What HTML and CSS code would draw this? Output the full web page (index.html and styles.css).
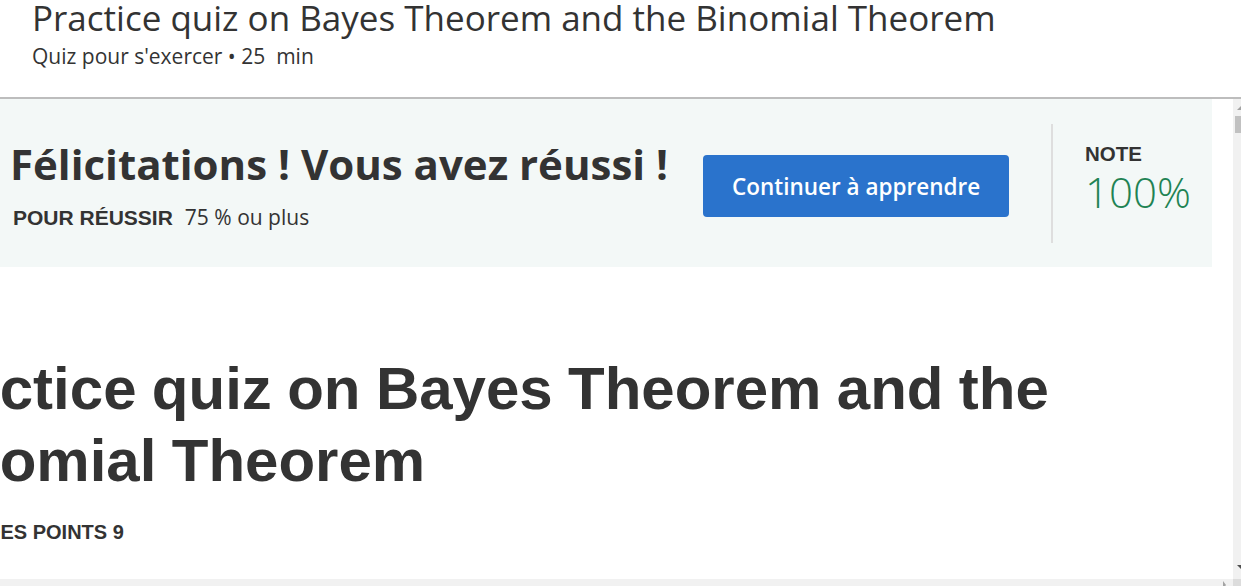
FILE: index.html
```html
<!DOCTYPE html>
<html lang="fr">
<head>
<meta charset="utf-8">
<title>Practice quiz on Bayes Theorem and the Binomial Theorem</title>
<link rel="stylesheet" href="styles.css">
</head>
<body>
<header class="top">
  <h1 class="top-title">Practice quiz on Bayes Theorem and the Binomial Theorem</h1>
  <div class="top-sub">Quiz pour s'exercer • 25&nbsp; min</div>
</header>
<div class="frame">
  <div class="frame-row">
    <main class="viewport">
      <section class="banner">
        <div class="result">
          <h2 class="congrats">Félicitations ! Vous avez réussi !</h2>
          <div class="pass"><span class="pass-label">POUR RÉUSSIR</span><span class="pass-value">75 % ou plus</span></div>
        </div>
        <button class="continue" type="button">Continuer à apprendre</button>
        <div class="divider"></div>
        <div class="grade">
          <div class="grade-label">NOTE</div>
          <div class="grade-value">100%</div>
        </div>
      </section>
      <section class="quiz">
        <h2 class="quiz-title">Practice quiz on Bayes Theorem and the Binomial Theorem</h2>
        <div class="points">TOTAL DES POINTS 9</div>
      </section>
    </main>
    <div class="vscroll">
      <span class="arrow-up"></span>
      <span class="vthumb"></span>
      <span class="arrow-down"></span>
    </div>
  </div>
  <div class="hscroll">
    <div class="htrack"><span class="arrow-right"></span></div>
    <div class="corner"></div>
  </div>
</div>
</body>
</html>
```
FILE: styles.css
```css
html, body {
  margin: 0;
  padding: 0;
  background: #ffffff;
  overflow: hidden;
}
body {
  width: 1241px;
  height: 586px;
  font-family: "Open Sans", "Liberation Sans", sans-serif;
  color: #333333;
}
.top {
  box-sizing: border-box;
  height: 99px;
  padding-left: 32px;
  border-bottom: 2px solid #bdbdbd;
}
.top-title {
  margin: 0;
  font-weight: 400;
  font-size: 35px;
  line-height: 35px;
  color: #333333;
}
.top-sub {
  margin-top: 9px;
  font-size: 21px;
  line-height: 24px;
  color: #333333;
}
.frame {
  height: 487px;
  display: flex;
  flex-direction: column;
}
.frame-row {
  flex: 1;
  display: flex;
  min-height: 0;
}
.viewport {
  flex: 1;
  overflow: hidden;
}
.banner {
  width: 1212px;
  height: 168px;
  box-sizing: border-box;
  background: #f3f8f7;
  display: flex;
  align-items: center;
  padding-left: 10px;
}
.result {
  margin-top: 4px;
}
.congrats {
  margin: 0;
  font-family: "Open Sans", sans-serif;
  font-weight: 700;
  font-size: 42px;
  line-height: 48px;
  color: #333333;
  white-space: nowrap;
}
.pass {
  margin-top: 16px;
  padding-left: 3px;
  display: flex;
  align-items: baseline;
  line-height: 26px;
}
.pass-label {
  font-family: "Liberation Sans", Arial, sans-serif;
  font-weight: 700;
  font-size: 21px;
  color: #333333;
  margin-right: 12px;
}
.pass-value {
  font-size: 21px;
  color: #333333;
}
.continue {
  margin-left: 35px;
  margin-top: 6px;
  width: 306px;
  height: 62px;
  border: none;
  border-radius: 4px;
  background: #2a73cc;
  color: #ffffff;
  font-family: "Open Sans", sans-serif;
  font-weight: 600;
  font-size: 22.5px;
  padding: 0;
  flex-shrink: 0;
}
.divider {
  width: 2px;
  height: 119px;
  background: #dedede;
  margin-left: 42px;
  flex-shrink: 0;
}
.grade {
  margin-left: 32px;
  margin-bottom: 8px;
}
.grade-label {
  font-family: "Liberation Sans", Arial, sans-serif;
  font-weight: 700;
  font-size: 20.5px;
  line-height: 24px;
  color: #333333;
}
.grade-value {
  margin-top: 2px;
  font-family: "Open Sans", sans-serif;
  font-weight: 300;
  font-size: 42px;
  line-height: 48px;
  color: #1f8354;
}
.quiz {
  padding-top: 86px;
}
.quiz-title {
  margin: 0 0 0 -97px;
  font-family: "Liberation Sans", Arial, sans-serif;
  font-weight: 700;
  font-size: 60px;
  line-height: 72px;
  word-spacing: -1.3px;
  color: #333333;
}
.points {
  margin: 23px 0 0 -84px;
  font-family: "Liberation Sans", Arial, sans-serif;
  font-weight: 700;
  font-size: 20px;
  line-height: 24px;
  color: #333333;
}
.vscroll {
  width: 8px;
  background: #f1f1f1;
  position: relative;
}
.arrow-up {
  position: absolute;
  left: 4px;
  top: 7px;
  width: 0;
  height: 0;
  border-left: 4px solid transparent;
  border-right: 4px solid transparent;
  border-bottom: 4px solid #a3a3a3;
}
.vthumb {
  position: absolute;
  left: 2px;
  top: 17px;
  width: 6px;
  height: 17px;
  background: #c1c1c1;
}
.arrow-down {
  position: absolute;
  left: 4px;
  bottom: 10px;
  width: 0;
  height: 0;
  border-left: 4px solid transparent;
  border-right: 4px solid transparent;
  border-top: 4px solid #505050;
}
.hscroll {
  height: 7px;
  display: flex;
}
.htrack {
  flex: 1;
  background: #f1f1f1;
  position: relative;
}
.arrow-right {
  position: absolute;
  left: 1223px;
  top: 2px;
  width: 0;
  height: 0;
  border-top: 4px solid transparent;
  border-bottom: 4px solid transparent;
  border-left: 3px solid #a3a3a3;
}
.corner {
  width: 8px;
  background: #dcdcdc;
}
```
